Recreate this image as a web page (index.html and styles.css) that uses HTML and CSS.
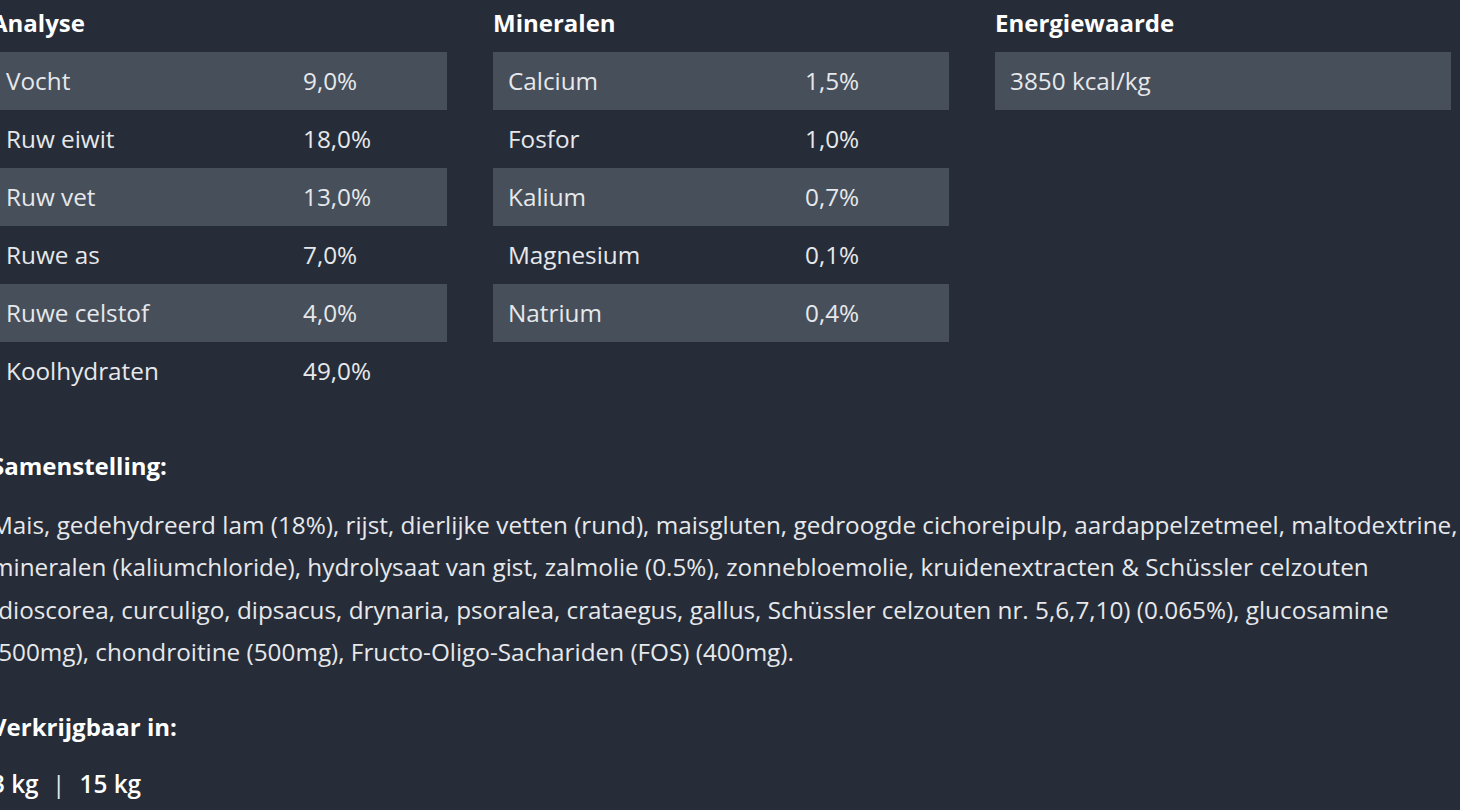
FILE: index.html
```html
<!DOCTYPE html>
<html lang="nl">
<head>
<meta charset="utf-8">
<title>Analyse</title>
<link rel="stylesheet" href="styles.css">
</head>
<body>
<div class="page">
  <div class="tables">
    <section class="block">
      <h3 class="block-title">Analyse</h3>
      <div class="row"><span class="label">Vocht</span><span class="value">9,0%</span></div>
      <div class="row"><span class="label">Ruw eiwit</span><span class="value">18,0%</span></div>
      <div class="row"><span class="label">Ruw vet</span><span class="value">13,0%</span></div>
      <div class="row"><span class="label">Ruwe as</span><span class="value">7,0%</span></div>
      <div class="row"><span class="label">Ruwe celstof</span><span class="value">4,0%</span></div>
      <div class="row"><span class="label">Koolhydraten</span><span class="value">49,0%</span></div>
    </section>
    <section class="block">
      <h3 class="block-title">Mineralen</h3>
      <div class="row"><span class="label">Calcium</span><span class="value">1,5%</span></div>
      <div class="row"><span class="label">Fosfor</span><span class="value">1,0%</span></div>
      <div class="row"><span class="label">Kalium</span><span class="value">0,7%</span></div>
      <div class="row"><span class="label">Magnesium</span><span class="value">0,1%</span></div>
      <div class="row"><span class="label">Natrium</span><span class="value">0,4%</span></div>
    </section>
    <section class="block">
      <h3 class="block-title">Energiewaarde</h3>
      <div class="row"><span class="label">3850 kcal/kg</span></div>
    </section>
  </div>

  <h4 class="sub-title first">Samenstelling:</h4>
  <p class="text">Mais, gedehydreerd lam (18%), rijst, dierlijke vetten (rund), maisgluten, gedroogde cichoreipulp, aardappelzetmeel, maltodextrine, mineralen (kaliumchloride), hydrolysaat van gist, zalmolie (0.5%), zonnebloemolie, kruidenextracten &amp; Schüssler celzouten (dioscorea, curculigo, dipsacus, drynaria, psoralea, crataegus, gallus, Schüssler celzouten nr. 5,6,7,10) (0.065%), glucosamine (500mg), chondroitine (500mg), Fructo-Oligo-Sachariden (FOS) (400mg).</p>

  <h4 class="sub-title">Verkrijgbaar in:</h4>
  <p class="sizes">3 kg <span class="sep">|</span> 15 kg</p>
</div>
</body>
</html>
```

FILE: styles.css
```css
html, body {
  margin: 0;
  padding: 0;
  background: #262d38;
  overflow: hidden;
}

body {
  font-family: "Open Sans", "Liberation Sans", sans-serif;
  color: #e6e8eb;
  font-size: 24.3px;
}

.page {
  margin-left: -9px;
  width: 1470px;
  padding-top: 6px;
}

.tables {
  display: grid;
  grid-template-columns: repeat(3, 456px);
  column-gap: 46px;
}

.block-title {
  margin: 0 0 12px 0;
  font-size: 24px;
  font-weight: 700;
  line-height: 34px;
  color: #ffffff;
}

.row {
  display: flex;
  height: 58px;
  line-height: 58px;
  padding-left: 15px;
}

.row:nth-of-type(odd) {
  background: #474f5a;
}

.label {
  width: 297px;
  flex: none;
}

.value {
  flex: 1;
}

.sub-title {
  margin: 32px 0 0 0;
  font-size: 24px;
  font-weight: 700;
  line-height: 42px;
  color: #ffffff;
}

.sub-title.first {
  margin-top: 45px;
}

.text {
  margin: 17px 0 0 0;
  line-height: 42.4px;
}

.sizes {
  margin: 15px 0 0 0;
  font-weight: 600;
  line-height: 42px;
  color: #ffffff;
}

.sep {
  font-weight: 400;
  color: #e6e8eb;
  margin: 0 8px 0 7px;
}
```
